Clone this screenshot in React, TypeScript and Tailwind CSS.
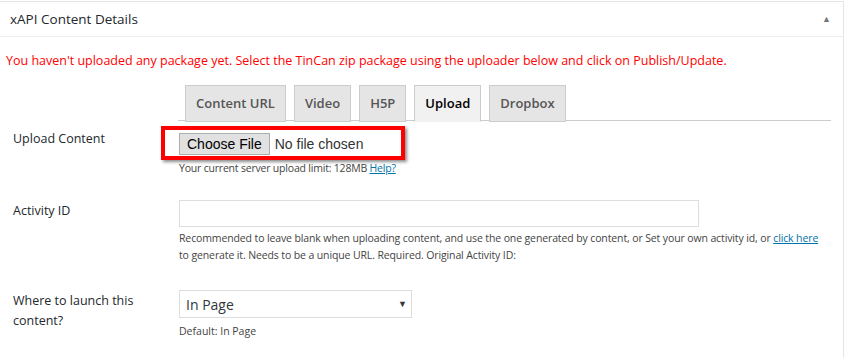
import React from 'react';

const tabs = ['Content URL', 'Video', 'H5P', 'Upload', 'Dropbox'];

function Tabs({ active }: { active: string }) {
  return (
    <div className="flex items-end gap-[8px] border-b border-[#cccccc] pl-[7px]">
      {tabs.map((tab) => (
        <div
          key={tab}
          className={`-mb-[2px] h-[37px] border border-[#cccccc] px-[10px] flex items-center text-[13px] font-semibold ${
            tab === active ? 'bg-[#f1f1f1] text-[#000000] border-b-[#f1f1f1]' : 'bg-[#e5e5e5] text-[#555555]'
          }`}
        >
          {tab}
        </div>
      ))}
    </div>
  );
}

function Row({ label, children }: { label: React.ReactNode; children: React.ReactNode }) {
  return (
    <div className="flex pl-[13px]">
      <div className="w-[166px] shrink-0 text-[12.5px] leading-[20px] text-[#23282d]">{label}</div>
      <div className="flex-1">{children}</div>
    </div>
  );
}

export default function App() {
  return (
    <div className="w-[846px] h-[358px] bg-white overflow-hidden" style={{ fontFamily: '"Open Sans", sans-serif' }}>
      <div className="w-[844px] h-full border-t border-r border-[#e5e5e5] mt-px">
        <div className="h-[35px] border-b border-[#eeeeee] flex items-center justify-between pl-[10px] pr-[12px]">
          <h2 className="text-[13.5px] font-medium text-[#23282d]">xAPI Content Details</h2>
          <span className="text-[9px] text-[#72777c]">▲</span>
        </div>

        <p className="mt-[15px] pl-[6px] text-[12.5px] leading-[18px] text-[#ff0000]">
          You haven't uploaded any package yet. Select the TinCan zip package using the uploader below and click on Publish/Update.
        </p>

        <div className="mt-[15px] ml-[178px] mr-[12px]">
          <Tabs active="Upload" />
        </div>

        <div className="mt-[7px]">
          <Row label={<span className="relative top-[1px]">Upload Content</span>}>
            <div className="relative pt-[2px]">
              <div className="absolute -left-[18px] -top-[2px] w-[244px] h-[34px] border-[4px] border-[#ff0000] shadow-[2px_2px_3px_rgba(0,0,0,0.45)]" />
              <div className="flex items-center h-[26px] pt-[2px]" style={{ fontFamily: '"Liberation Sans", Arial, sans-serif' }}>
                <button className="h-[22px] px-[7px] bg-[#e1e1e1] border border-[#adadad] text-[14px] text-black leading-none">
                  Choose File
                </button>
                <span className="ml-[5px] text-[14px] text-[#333333]">No file chosen</span>
              </div>
              <p className="mt-[4px] text-[10.5px] leading-[16px] text-[#444444] tracking-[-0.2px]">
                Your current server upload limit: 128MB <a className="text-[#0073aa] underline">Help?</a>
              </p>
            </div>
          </Row>

          <div className="mt-[24px]">
            <Row label={<span className="relative top-[1px]">Activity ID</span>}>
              <div className="w-[520px] h-[27px] border border-[#dddddd] bg-white" />
              <p className="mt-[3px] text-[10.5px] leading-[17px] text-[#444444] tracking-[-0.12px]">
                Recommended to leave blank when uploading content, and use the one generated by content, or Set your own activity id, or{' '}
                <a className="text-[#0073aa] underline">click here</a>
                <br />
                to generate it. Needs to be a unique URL. Required. Original Activity ID:
              </p>
            </Row>
          </div>

          <div className="mt-[26px]">
            <Row label={<span className="block w-[130px] pt-[1px]">Where to launch this content?</span>}>
              <div className="w-[233px] h-[28px] border border-[#dddddd] bg-white flex items-center justify-between pl-[6px] pr-[4px]">
                <span className="text-[14px] text-[#32373c]">In Page</span>
                <span className="text-[9px] text-[#32373c]">▼</span>
              </div>
              <p className="mt-[5px] text-[10.5px] leading-[16px] text-[#444444]">Default: In Page</p>
            </Row>
          </div>
        </div>
      </div>
    </div>
  );
}
